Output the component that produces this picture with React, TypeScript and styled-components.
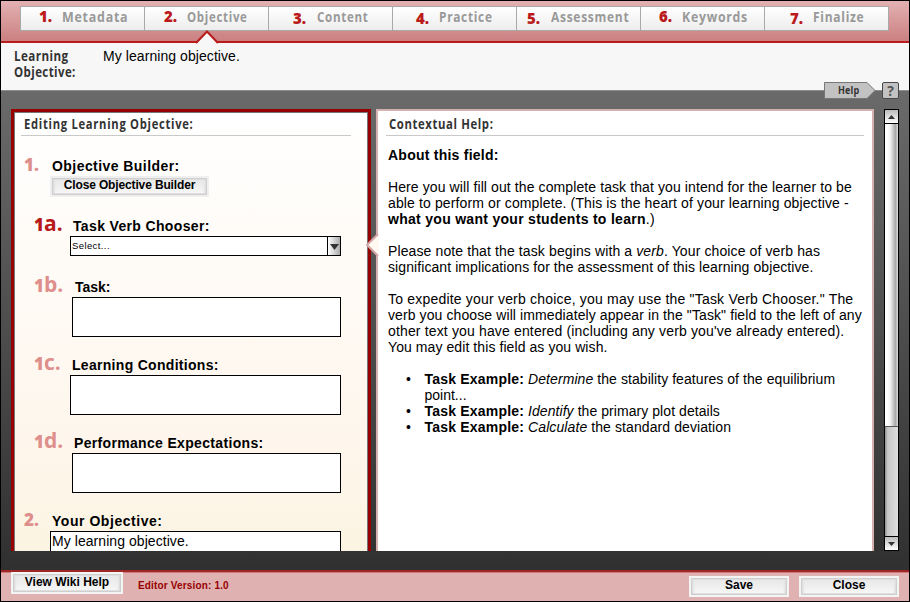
import React from 'react';
import styled, { createGlobalStyle } from 'styled-components';

const Global = createGlobalStyle`
  * { box-sizing: border-box; }
  body { margin: 0; }
  p, ul, h2 { margin: 0; padding: 0; }
`;

const sans = '"Liberation Sans", Arial, sans-serif';
const display = '"Open Sans", "Noto Sans", sans-serif';

const Window = styled.div`
  width: 910px;
  height: 602px;
  border: 1px solid #000;
  display: flex;
  flex-direction: column;
  overflow: hidden;
  font: 14px/16px ${sans};
  color: #000;
`;

/* Header and tabs */
const Header = styled.header`
  height: 42px;
  flex: none;
  padding: 5px 0 0 19px;
  background: linear-gradient(#e3b1b3, #cb8080);
  border-bottom: 2px solid #b81c1c;
`;
const Tabs = styled.nav`
  display: flex;
  width: 869px;
  height: 25px;
  border: 1px solid #a9a9a9;
  background: linear-gradient(#fff, #ededed);
`;
const Tab = styled.div<{ $pad: number }>`
  position: relative;
  flex: none;
  width: 124px;
  height: 23px;
  display: flex;
  padding-left: ${p => p.$pad}px;
  &:not(:last-child) { border-right: 1px solid #a9a9a9; }
  &:last-child { width: 123px; }
`;
const TabNumber = styled.span<{ $w: number; $size: number; $drop: number }>`
  flex: none;
  width: ${p => p.$w}px;
  font: 800 ${p => p.$size}px/20px ${display};
  color: #bb1a1a;
  margin-top: ${p => p.$drop}px;
  white-space: nowrap;
`;
const Squeezed = styled.span<{ $x: number; $size?: number; $color?: string; $ls?: number }>`
  display: inline-block;
  flex: none;
  transform: scaleX(${p => p.$x});
  transform-origin: 0 50%;
  font: 700 ${p => p.$size ?? 15}px/18px ${display};
  letter-spacing: ${p => p.$ls ?? 0.9}px;
  color: ${p => p.$color ?? '#999'};
  white-space: nowrap;
`;
const TabPointer = styled.svg`
  position: absolute;
  left: 49px;
  top: 23px;
  z-index: 1;
`;

/* Objective summary */
const Summary = styled.section`
  flex: none;
  height: 48px;
  background: #f7f7f7;
  border-bottom: 1px solid #8d8d8d;
  display: flex;
  position: relative;
  padding: 5px 0 0 13px;
`;
const SummaryTitle = styled.div`
  width: 89px;
  display: flex;
  flex-direction: column;
  span { line-height: 16px; }
`;
const HelpTag = styled.div`
  position: absolute;
  left: 823px;
  top: 39px;
  width: 76px;
  height: 17px;
  display: flex;
  z-index: 2;
`;
const TagBody = styled.div`
  position: relative;
  width: 52px;
  height: 17px;
  padding-left: 14px;
  svg { position: absolute; left: 0; top: 0; }
  span { position: relative; line-height: 16px; vertical-align: top; }
`;
const QuestionBox = styled.div`
  width: 17px;
  height: 17px;
  margin-left: 6px;
  border: 1px solid #484848;
  border-radius: 2px;
  background: #c2c2c2;
  text-align: center;
  font: 700 14px/15px ${display};
  color: #555;
`;

/* Work area */
const Work = styled.main`
  flex: none;
  height: 479px;
  background: linear-gradient(#6a6a6a, #303030);
  padding: 18px 0 0 10px;
  display: flex;
`;
const Editor = styled.section`
  width: 360px;
  height: 442px;
  border: 3px solid #960000;
  border-bottom: 0;
  background: linear-gradient(#fff, #fef6ec 75%, #fcf4e2);
  box-shadow: inset 1px 1px #777, inset -1px 0 #777;
  overflow: hidden;
`;
const PanelTitle = styled.h2<{ $left: number; $right: number; $line: number }>`
  height: ${p => p.$line + 4}px;
  margin: 0 ${p => p.$right}px 0 ${p => p.$left - 3}px;
  padding-left: 3px;
  border-bottom: 1px solid #c9c9c9;
  line-height: ${p => p.$line}px;
  span { line-height: ${p => p.$line + 4}px; vertical-align: top; }
`;
const Field = styled.div<{ $h: number }>`
  height: ${p => p.$h}px;
`;
const FieldHead = styled.div`
  height: 18px;
  display: flex;
`;
const Marker = styled.span<{ $left: number; $w: number; $active?: boolean }>`
  flex: none;
  width: ${p => p.$w}px;
  margin-left: ${p => p.$left}px;
  height: 18px;
  font: 800 17px/13px ${display};
  color: ${p => (p.$active ? '#b81a1a' : '#de8f8c')};
  white-space: nowrap;
  b { font-size: 21px; line-height: 0; font-weight: 700; }
`;
const Label = styled.span<{ $ls?: number }>`
  font-weight: bold;
  letter-spacing: ${p => p.$ls ?? 0}px;
  white-space: nowrap;
`;
const Input = styled.div<{ $left: number }>`
  width: ${p => 327 - p.$left}px;
  height: 40px;
  margin-left: ${p => p.$left}px;
  border: 1px solid #000;
  background: #fff;
  padding: 1px 1px;
  letter-spacing: .06px;
`;
const Select = styled(Input)`
  height: 20px;
  padding: 0 0 0 1px;
  display: flex;
  justify-content: space-between;
  font-size: 9.5px;
  letter-spacing: .4px;
  line-height: 18px;
`;
const SelectArrow = styled.div`
  width: 13px;
  border-left: 1px solid #000;
  background: linear-gradient(90deg, #fff, #aaa);
  svg { display: block; margin: 7px 0 0 2px; }
`;
const Button = styled.div<{ $w: number; $h: number; $pad: number }>`
  width: ${p => p.$w}px;
  height: ${p => p.$h}px;
  flex: none;
  border: 2px solid #f4f4f4;
  background: linear-gradient(#e6e6e6, #f8f8f8);
  box-shadow: inset 0 0 0 1px #cfcfcf, inset 0 0 0 2px #dedede, inset 3px 0 2px #e4e4e4, inset -3px 0 2px #e4e4e4;
  font: bold 12px/14px ${sans};
  padding: ${p => p.$pad}px 0 0;
  text-align: center;
  white-space: nowrap;
`;
const BuilderButton = styled(Button)`
  margin-left: 36px;
  letter-spacing: -.14px;
  border-color: #efefef;
`;

const Context = styled.section`
  position: relative;
  width: 498px;
  height: 442px;
  margin-left: 5px;
  border: 2px solid #d5b0b0;
  border-bottom: 0;
  background: #fff;
`;
const Pointer = styled.svg`
  position: absolute;
  left: -13px;
  top: 122px;
`;
const Copy = styled.div`
  padding: 11px 0 0 10px;
`;
const Line = styled.p<{ $ls?: number; $gap?: boolean }>`
  height: 16px;
  letter-spacing: ${p => p.$ls ?? 0}px;
  margin-top: ${p => (p.$gap ? 16 : 0)}px;
  white-space: nowrap;
`;
const Bullets = styled.ul`
  list-style: none;
  margin-top: 16px;
`;
const Bullet = styled.li`
  display: grid;
  grid-template-columns: 18.5px 1fr;
  padding-left: 18px;
  b { letter-spacing: .2px; }
`;

const Scrollbar = styled.div`
  width: 15px;
  height: 442px;
  margin-left: 10px;
  border: 1px solid #000;
  background: linear-gradient(90deg, #8f8f8f, #c6c6c6 20%, #dedede);
  display: flex;
  flex-direction: column;
`;
const ScrollButton = styled.div`
  height: 13px;
  flex: none;
  background: linear-gradient(#bbb, #fff);
  svg { display: block; margin: 5px 0 0 3px; }
`;
const Thumb = styled.div`
  height: 304px;
  flex: none;
  border-top: 1px solid #000;
  border-bottom: 1px solid #555;
  background: linear-gradient(90deg, #fff 20%, #f3f3f3 40%, #a8a8a8 80%, #ddd);
`;
const Track = styled.div`
  flex: 1;
  border-bottom: 1px solid #000;
`;

/* Footer */
const Footer = styled.footer`
  flex: 1;
  border-top: 2px solid #a02626;
  background: #dfb1b1;
  box-shadow: inset 0 1px #cf7b7b;
  display: flex;
  padding-left: 10px;
`;
const Version = styled.span`
  flex: none;
  width: 566px;
  padding: 6px 0 0 15px;
  font: bold 10px/16px ${sans};
  color: #970000;
  span { letter-spacing: .16px; }
`;
const FooterActions = styled.div`
  display: flex;
  gap: 10px;
  padding-top: 4px;
`;

const tabs = [
  { n: 1, label: 'Metadata', num: 39, text: 62, x: 0.83, size: 15, drop: -1 },
  { n: 2, label: 'Objective', num: 164, text: 187, x: 0.765, size: 15, drop: -1 },
  { n: 3, label: 'Content', num: 293, text: 317, x: 0.77, size: 15, drop: 1 },
  { n: 4, label: 'Practice', num: 416, text: 439, x: 0.79, size: 15, drop: 1 },
  { n: 5, label: 'Assessment', num: 527, text: 551, x: 0.8, size: 15, drop: 1 },
  { n: 6, label: 'Keywords', num: 659, text: 682, x: 0.82, size: 15, drop: -1 },
  { n: 7, label: 'Finalize', num: 790, text: 813, x: 0.8, size: 15, drop: 1 },
];

const Caret = ({ up, w = 7 }: { up?: boolean; w?: number }) => (
  <svg width={w} height={w > 7 ? 6 : 4} viewBox="0 0 8 5" preserveAspectRatio="none">
    <path d={up ? 'M0 5L4 0L8 5Z' : 'M0 0L4 5L8 0Z'} fill="#333" />
  </svg>
);

export default function App() {
  return (
    <Window>
      <Global />
      <Header>
        <Tabs>
          {tabs.map((t, i) => (
            <Tab key={t.n} $pad={t.num - 21 - i * 124}>
              <TabNumber $w={t.text - t.num} $size={t.size} $drop={t.drop}>{t.n}.</TabNumber>
              <Squeezed $x={t.x}>{t.label}</Squeezed>
              {t.n === 2 && (
                <TabPointer width="26" height="14" viewBox="0 0 26 14">
                  <path d="M2 14L13 2L24 14Z" fill="#f7f7f7" />
                  <path d="M2 13L13 1.5L24 13" fill="none" stroke="#b81c1c" strokeWidth="2" />
                </TabPointer>
              )}
            </Tab>
          ))}
        </Tabs>
      </Header>

      <Summary>
        <SummaryTitle>
          <Squeezed $x={0.83} $size={14} $color="#333" $ls={0.5}>Learning</Squeezed>
          <Squeezed $x={0.82} $size={14} $color="#333" $ls={0.5}>Objective:</Squeezed>
        </SummaryTitle>
        <Line $ls={0.07}>My learning objective.</Line>
        <HelpTag>
          <TagBody>
            <svg width="52" height="17" viewBox="0 0 52 17">
              <path d="M.5.5H43L51 8.5L43 16.5H.5Z" fill="#c2c2c2" stroke="#777" />
            </svg>
            <Squeezed $x={0.82} $size={11} $color="#333" $ls={0.2}>Help</Squeezed>
          </TagBody>
          <QuestionBox>?</QuestionBox>
        </HelpTag>
      </Summary>

      <Work>
        <Editor>
          <PanelTitle $left={10} $right={17} $line={20}>
            <Squeezed $x={0.8} $size={14} $color="#333">Editing Learning Objective:</Squeezed>
          </PanelTitle>
          <Field $h={22} />
          <Field $h={60}>
            <FieldHead>
              <Marker $left={10} $w={28}>1.</Marker>
              <Label $ls={0.44}>Objective Builder:</Label>
            </FieldHead>
            <BuilderButton $w={159} $h={21} $pad={0}>Close Objective Builder</BuilderButton>
          </Field>
          <Field $h={61}>
            <FieldHead>
              <Marker $left={20} $w={39} $active>1<b>a.</b></Marker>
              <Label $ls={0.35}>Task Verb Chooser:</Label>
            </FieldHead>
            <Select $left={56}>
              <span>Select...</span>
              <SelectArrow><Caret w={9} /></SelectArrow>
            </Select>
          </Field>
          <Field $h={78}>
            <FieldHead>
              <Marker $left={20} $w={41}>1<b>b.</b></Marker>
              <Label>Task:</Label>
            </FieldHead>
            <Input $left={58} />
          </Field>
          <Field $h={78}>
            <FieldHead>
              <Marker $left={20} $w={38}>1<b>c.</b></Marker>
              <Label $ls={0.3}>Learning Conditions:</Label>
            </FieldHead>
            <Input $left={56} />
          </Field>
          <Field $h={78}>
            <FieldHead>
              <Marker $left={20} $w={40}>1<b>d.</b></Marker>
              <Label $ls={0.33}>Performance Expectations:</Label>
            </FieldHead>
            <Input $left={58} />
          </Field>
          <Field $h={78}>
            <FieldHead>
              <Marker $left={10} $w={28}>2.</Marker>
              <Label $ls={0.54}>Your Objective:</Label>
            </FieldHead>
            <Input $left={36}>My learning objective.</Input>
          </Field>
        </Editor>

        <Context>
          <Pointer width="14" height="24" viewBox="0 0 14 24">
            <path d="M14 1L2 12L14 23Z" fill="#fff9f2" />
            <path d="M13 1L2 12L13 23" fill="none" stroke="#d5a5a5" strokeWidth="2" />
          </Pointer>
          <PanelTitle $left={11} $right={8} $line={21}>
            <Squeezed $x={0.81} $size={14} $color="#333" $ls={0.75}>Contextual Help:</Squeezed>
          </PanelTitle>
          <Copy>
            <Line $ls={0.24}><b>About this field:</b></Line>
            <Line $gap $ls={0.1}>Here you will fill out the complete task that you intend for the learner to be</Line>
            <Line $ls={0.125}>able to perform or complete. (This is the heart of your learning objective -</Line>
            <Line $ls={0.29}><b>what you want your students to learn</b>.)</Line>
            <Line $gap $ls={0.115}>Please note that the task begins with a <i>verb</i>. Your choice of verb has</Line>
            <Line $ls={0.085}>significant implications for the assessment of this learning objective.</Line>
            <Line $gap $ls={0.195}>To expedite your verb choice, you may use the "Task Verb Chooser." The</Line>
            <Line $ls={0.1}>verb you choose will immediately appear in the "Task" field to the left of any</Line>
            <Line $ls={0.15}>other text you have entered (including any verb you've already entered).</Line>
            <Line $ls={0.08}>You may edit this field as you wish.</Line>
            <Bullets>
              <Bullet>
                <span>•</span>
                <div>
                  <Line $ls={0.07}><b>Task Example:</b> <i>Determine</i> the stability features of the equilibrium</Line>
                  <Line>point...</Line>
                </div>
              </Bullet>
              <Bullet><span>•</span><Line $ls={0.06}><b>Task Example:</b> <i>Identify</i> the primary plot details</Line></Bullet>
              <Bullet><span>•</span><Line $ls={0.09}><b>Task Example:</b> <i>Calculate</i> the standard deviation</Line></Bullet>
            </Bullets>
          </Copy>
        </Context>

        <Scrollbar>
          <ScrollButton><Caret up /></ScrollButton>
          <Thumb />
          <Track />
          <ScrollButton><Caret /></ScrollButton>
        </Scrollbar>
      </Work>

      <Footer>
        <Button $w={112} $h={22} $pad={1}>View Wiki Help</Button>
        <Version><span>Editor Version: 1.0</span></Version>
        <FooterActions>
          <Button $w={100} $h={21} $pad={0}>Save</Button>
          <Button $w={100} $h={21} $pad={0}>Close</Button>
        </FooterActions>
      </Footer>
    </Window>
  );
}
